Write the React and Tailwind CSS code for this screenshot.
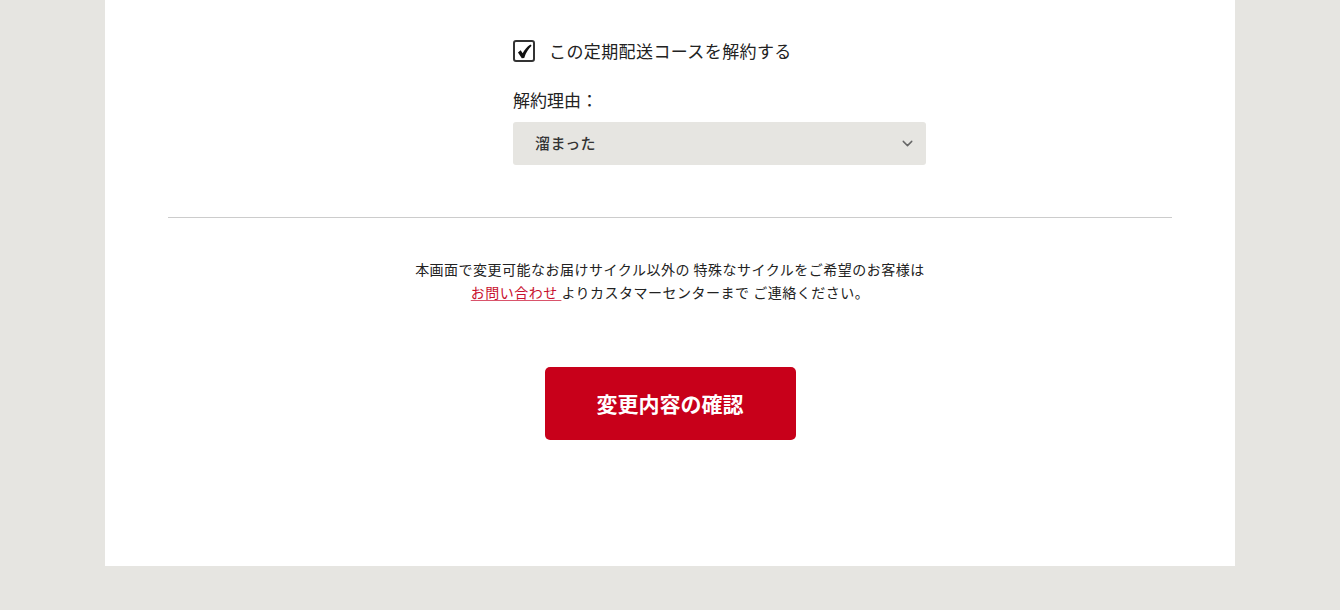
const Check = () => (
  <svg viewBox="0 0 24 24" className="w-[17px] h-[17px]" fill="#111">
    <path d="M2.8 13.4 L6.6 10.2 L9.4 14.6 C12 9.6 15.4 5.4 20.4 2.2 L22 4 C17.4 8.2 14.2 13.6 11.6 21 L8.2 21.4 Z" />
  </svg>
);

const App = () => {
  return (
    <div
      className="min-h-[610px] bg-[#e6e5e1]"
      style={{ fontFamily: '"Noto Sans CJK JP", "Noto Sans", sans-serif' }}
    >
      <div className="mx-auto w-[1130px] h-[566px] bg-white px-[63px] pt-[39px] text-[#222]">
        {/* Cancel form */}
        <div className="ml-[345px] w-[413px]">
          <label className="flex items-center gap-[14px] h-[24px]">
            <span className="flex items-center justify-center w-[22px] h-[22px] rounded-[3px] border-2 border-[#333] bg-white">
              <Check />
            </span>
            <span className="text-[17px] leading-[24px] tracking-[0.4px]">この定期配送コースを解約する</span>
          </label>
          <p className="mt-[25px] text-[17px] leading-[24px]">解約理由：</p>
          <div className="mt-[10px] flex items-center justify-between h-[43px] rounded-[3px] bg-[#e6e5e1] pl-[22px] pr-[10px]">
            <span className="text-[15px] font-medium text-[#333] tracking-[0.4px]">溜まった</span>
            <svg viewBox="0 0 24 24" className="w-[17px] h-[17px]" fill="none" stroke="#666" strokeWidth="2" strokeLinecap="round" strokeLinejoin="round">
              <path d="M6 9l6 6 6-6" />
            </svg>
          </div>
        </div>

        <div className="mt-[52px] border-t border-[#cccccc]" />

        {/* Notice */}
        <div className="mt-[40px] text-center text-[14px] leading-[23px] tracking-[0.5px] text-[#222]">
          <p>本画面で変更可能なお届けサイクル以外の 特殊なサイクルをご希望のお客様は</p>
          <p>
            <a href="#" className="text-[#c8102e] underline underline-offset-2 decoration-[#d9536b]">お問い合わせ </a>
            よりカスタマーセンターまで ご連絡ください。
          </p>
        </div>

        <div className="mt-[63px] flex justify-center">
          <button className="w-[251px] h-[73px] rounded-[5px] bg-[#c8001a] text-white text-[21px] font-bold">
            変更内容の確認
          </button>
        </div>
      </div>
    </div>
  );
};

export default App;
